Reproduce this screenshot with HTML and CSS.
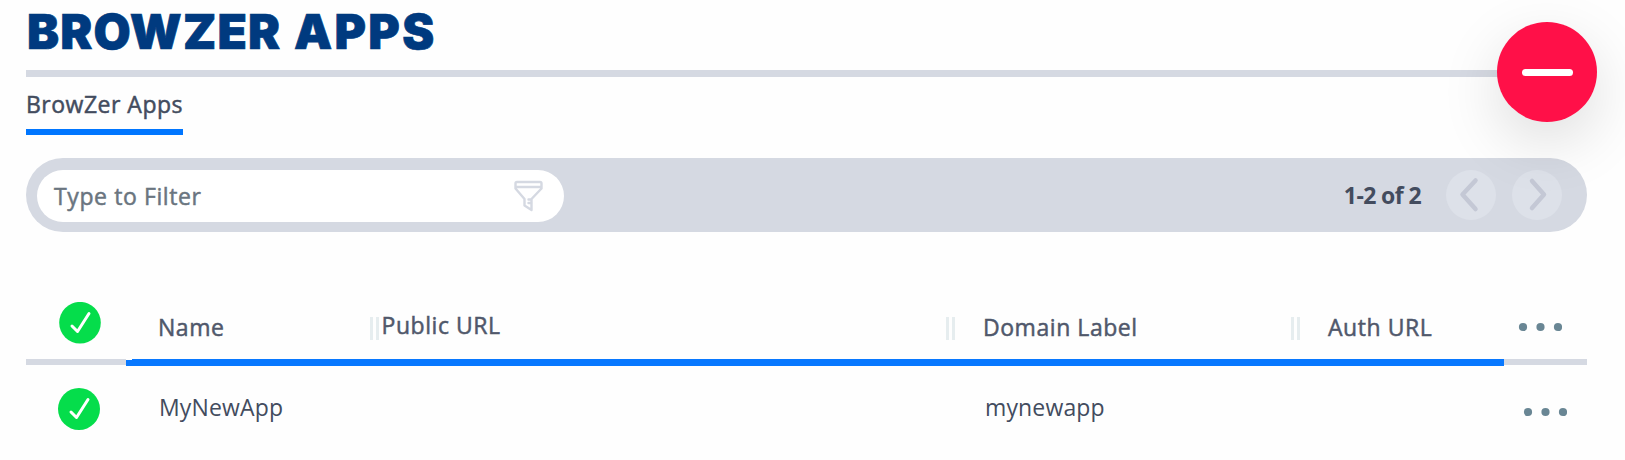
FILE: index.html
```
<!DOCTYPE html>
<html lang="en">
<head>
<meta charset="utf-8">
<title>BrowZer Apps</title>
<link rel="stylesheet" href="styles.css">
</head>
<body>
<main class="page">
  <h1 class="title">BROWZER <span class="title-end">APPS</span></h1>
  <nav class="tabs"><a class="tab">BrowZer Apps</a></nav>
  <section class="toolbar">
    <div class="filter">
      <span class="filter-text">Type to Filter</span>
      <svg class="funnel" width="30" height="32" viewBox="0 0 30 32" fill="none" stroke="#d5d9e2" stroke-width="2.400" stroke-linejoin="round" stroke-linecap="round"><path d="M3 2H26Q27.500 2 27.500 3.500V7H1.500V3.500Q1.500 2 3 2ZM1.500 7V8.500L10.500 19V25.500L17.500 30V19L27.500 8.500V7M14.500 19.500H17M14.500 23H17"/></svg>
    </div>
    <span class="count">1-2 of 2</span>
    <button class="page-button"><svg width="50" height="50" viewBox="0 0 50 50"><path d="M29.500 10.500L16.500 24.500L29.500 39"/></svg></button>
    <button class="page-button"><svg width="50" height="50" viewBox="0 0 50 50"><path d="M20 11L32 24.500L20 38"/></svg></button>
  </section>
  <section class="table">
    <div class="row head">
      <div class="cell check"><svg width="42" height="42" viewBox="0 0 42 42"><circle cx="21" cy="20.700" r="20.800"/><path d="M13 24L18.500 29.500L30 11.500"/></svg></div>
      <div class="cell name">Name</div>
      <div class="cell url"><i class="grip"></i><span class="label">Public URL</span></div>
      <div class="cell domain"><i class="grip"></i><span class="label">Domain Label</span></div>
      <div class="cell auth"><i class="grip"></i><span class="label">Auth URL</span></div>
      <div class="cell more"><svg width="44" height="10" viewBox="0 0 44 10"><circle cx="5" cy="5" r="4.100"/><circle cx="22.500" cy="5" r="4.100"/><circle cx="40" cy="5" r="4.100"/></svg></div>
    </div>
    <div class="divider"><i class="edge"></i><i class="accent"></i><i class="edge end"></i></div>
    <div class="row body">
      <div class="cell check"><svg width="42" height="42" viewBox="0 0 42 42"><circle cx="21" cy="21" r="21"/><path d="M13 24L18.500 29.500L30 11.500"/></svg></div>
      <div class="cell name">MyNewApp</div>
      <div class="cell url"></div>
      <div class="cell domain"><span class="label">mynewapp</span></div>
      <div class="cell auth"></div>
      <div class="cell more"><svg width="44" height="10" viewBox="0 0 44 10"><circle cx="5" cy="5" r="4.100"/><circle cx="22.500" cy="5" r="4.100"/><circle cx="40" cy="5" r="4.100"/></svg></div>
    </div>
  </section>
</main>
<button class="fab"><i class="minus"></i></button>
</body>
</html>
```
FILE: styles.css
```
* { box-sizing: border-box; }
body { margin: 0; background: #fefefe; overflow: hidden; font-family: "Open Sans", sans-serif; color: #434c5e; }
button { border: 0; padding: 0; }
.page { height: 460px; padding: 0 38px 0 26px; }
.title { margin: 0; height: 77px; padding-left: 1px; border-bottom: 7px solid #d5d9e2; font: 900 48px/63px Inter, sans-serif; letter-spacing: 1.2px; word-spacing: 2px; color: #003a7f; white-space: nowrap; -webkit-text-stroke: 0.7px #003a7f; }
.title-end { letter-spacing: 2.3px; }
.tabs { display: flex; height: 81px; }
.tab { width: 157px; height: 58px; border-bottom: 6px solid #0076ff; font-size: 23px; line-height: 54px; letter-spacing: 0.5px; -webkit-text-stroke: 0.5px; white-space: nowrap; }
.toolbar { display: flex; align-items: center; height: 74px; padding: 0 25px 0 11px; border-radius: 37px; background: #d5d9e2; }
.filter { display: flex; align-items: center; justify-content: space-between; width: 527px; height: 52px; margin-top: 2px; padding: 0 20px 0 17px; border-radius: 26px; background: #fff; }
.filter-text { font-size: 23px; line-height: 52px; letter-spacing: 0.6px; -webkit-text-stroke: 0.5px; color: #6a7580; }
.count { margin-left: auto; margin-right: 25px; font-size: 23px; font-weight: 700; letter-spacing: -0.6px; }
.page-button { width: 50px; height: 50px; border-radius: 50%; background: #dde1e9; }
.page-button + .page-button { margin-left: 16px; }
.page-button svg { display: block; fill: none; stroke: #c4c8d5; stroke-width: 4.5; stroke-linecap: round; stroke-linejoin: round; }
.table { padding-top: 70px; }
.row { display: grid; grid-template-columns: 132px 212px 576px 345px 234px 62px; font-size: 23px; line-height: 32px; white-space: nowrap; }
.head { height: 57px; letter-spacing: 0.55px; color: #50586b; -webkit-text-stroke: 0.5px; }
.body { height: 90px; padding-top: 22px; letter-spacing: 0.15px; }
.cell { display: flex; align-items: flex-start; }
.check { padding-left: 33px; }
.body .check { padding-left: 32px; }
.check circle { fill: #05dd4b; }
.check path { fill: none; stroke: #fff; stroke-width: 3; stroke-linecap: round; stroke-linejoin: round; }
.head .name, .head .label { padding-top: 9px; }
.head .url .label { padding: 7px 0 0 2.5px; }
.head .domain .label, .head .auth .label { padding-left: 28px; }
.body .name { padding-left: 1px; }
.body .domain { padding-left: 39px; }
.body .label, .body .name { padding-top: 3px; }
.grip { width: 9px; height: 23px; margin-top: 15px; border: solid #e6edef; border-width: 0 3px; flex: none; }
.more { padding-top: 20px; margin-left: -7px; }
.body .more { padding-top: 19px; margin-left: -2px; }
.more svg { fill: #698694; }
.divider { display: flex; height: 7px; }
.edge { width: 100px; height: 6px; background: #d5d9e2; }
.end { width: 83px; }
.accent { flex: 1; background: linear-gradient(#fefefe, #fefefe) 0 0 / 6px 1px no-repeat #0878ff; }
.fab { position: absolute; left: 1497px; top: 22px; display: grid; place-items: center; width: 100px; height: 100px; border-radius: 50%; background: #ff1048; box-shadow: 0 20px 60px rgba(0, 0, 0, 0.13); }
.minus { width: 51px; height: 7px; border-radius: 4px; background: #fff; }
```
